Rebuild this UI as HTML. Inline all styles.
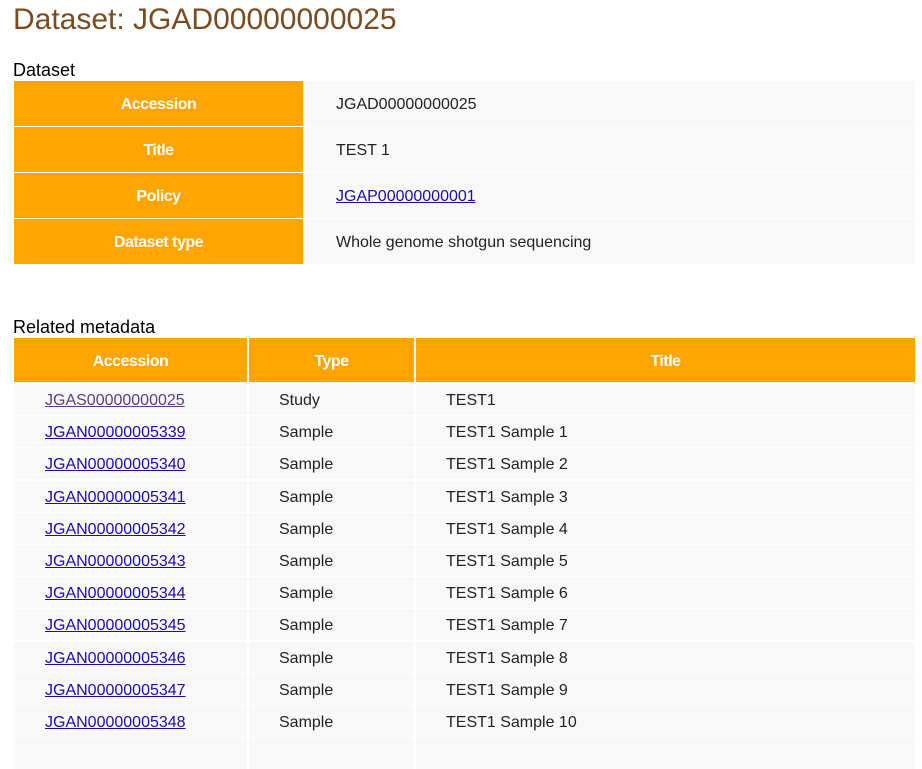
<!DOCTYPE html>
<html><head><meta charset="utf-8"><style>
body{margin:0;background:#fff;font-family:"Liberation Sans",Arial,sans-serif;width:922px;height:745px;overflow:hidden;position:relative}
.a{position:absolute;box-sizing:border-box}
h1{position:absolute;left:13px;top:3px;margin:0;font-weight:normal;font-size:30px;color:#7b4a1e}
.h2{position:absolute;left:13px;font-size:18px;color:#000}
.th{background:#ffa500;color:#fff;font-weight:bold;font-size:16px;display:flex;align-items:center;justify-content:center;letter-spacing:-0.5px;padding-top:3px}
.td{background:#f8f8f8;font-size:16px;color:#222;display:flex;align-items:center;padding-top:3px}
a{color:#1a0dab;text-decoration:underline}
a.v{color:#5a3b8c}
</style></head><body>
<h1>Dataset: JGAD00000000025</h1>
<div class="h2" style="top:60px">Dataset</div>
<div class="a th" style="left:14px;top:81px;width:289px;height:45px">Accession</div>
<div class="a td" style="left:305px;top:81px;width:610px;height:45px;padding-left:31px">JGAD00000000025</div>
<div class="a th" style="left:14px;top:127px;width:289px;height:45px">Title</div>
<div class="a td" style="left:305px;top:127px;width:610px;height:45px;padding-left:31px">TEST 1</div>
<div class="a th" style="left:14px;top:173px;width:289px;height:45px">Policy</div>
<div class="a td" style="left:305px;top:173px;width:610px;height:45px;padding-left:31px"><a>JGAP00000000001</a></div>
<div class="a th" style="left:14px;top:219px;width:289px;height:45px">Dataset type</div>
<div class="a td" style="left:305px;top:219px;width:610px;height:45px;padding-left:31px">Whole genome shotgun sequencing</div>
<div class="h2" style="top:317px">Related metadata</div>
<div class="a th" style="left:14px;top:338px;width:233px;height:44px">Accession</div>
<div class="a th" style="left:249px;top:338px;width:165px;height:44px">Type</div>
<div class="a th" style="left:416px;top:338px;width:499px;height:44px">Title</div>
<div id="rows"></div>
<script>
var r=[["JGAS00000000025","Study","TEST1"]];
for(var i=1;i<=10;i++)r.push(["JGAN0000000"+(5338+i),"Sample","TEST1 Sample "+i]);
r.push(["","",""]);
var h="";
r.forEach(function(x,i){var y=384+i*32.2;
h+='<div class="a td" style="left:14px;top:'+y+'px;width:233px;height:31px;padding-left:31px">'+(x[0]?'<a class="'+(i==0?'v':'')+'">'+x[0]+'</a>':'')+'</div>';
h+='<div class="a td" style="left:249px;top:'+y+'px;width:165px;height:31px;padding-left:30px">'+x[1]+'</div>';
h+='<div class="a td" style="left:416px;top:'+y+'px;width:499px;height:31px;padding-left:30px">'+x[2]+'</div>';});
document.getElementById("rows").innerHTML=h;
</script>
</body></html>
